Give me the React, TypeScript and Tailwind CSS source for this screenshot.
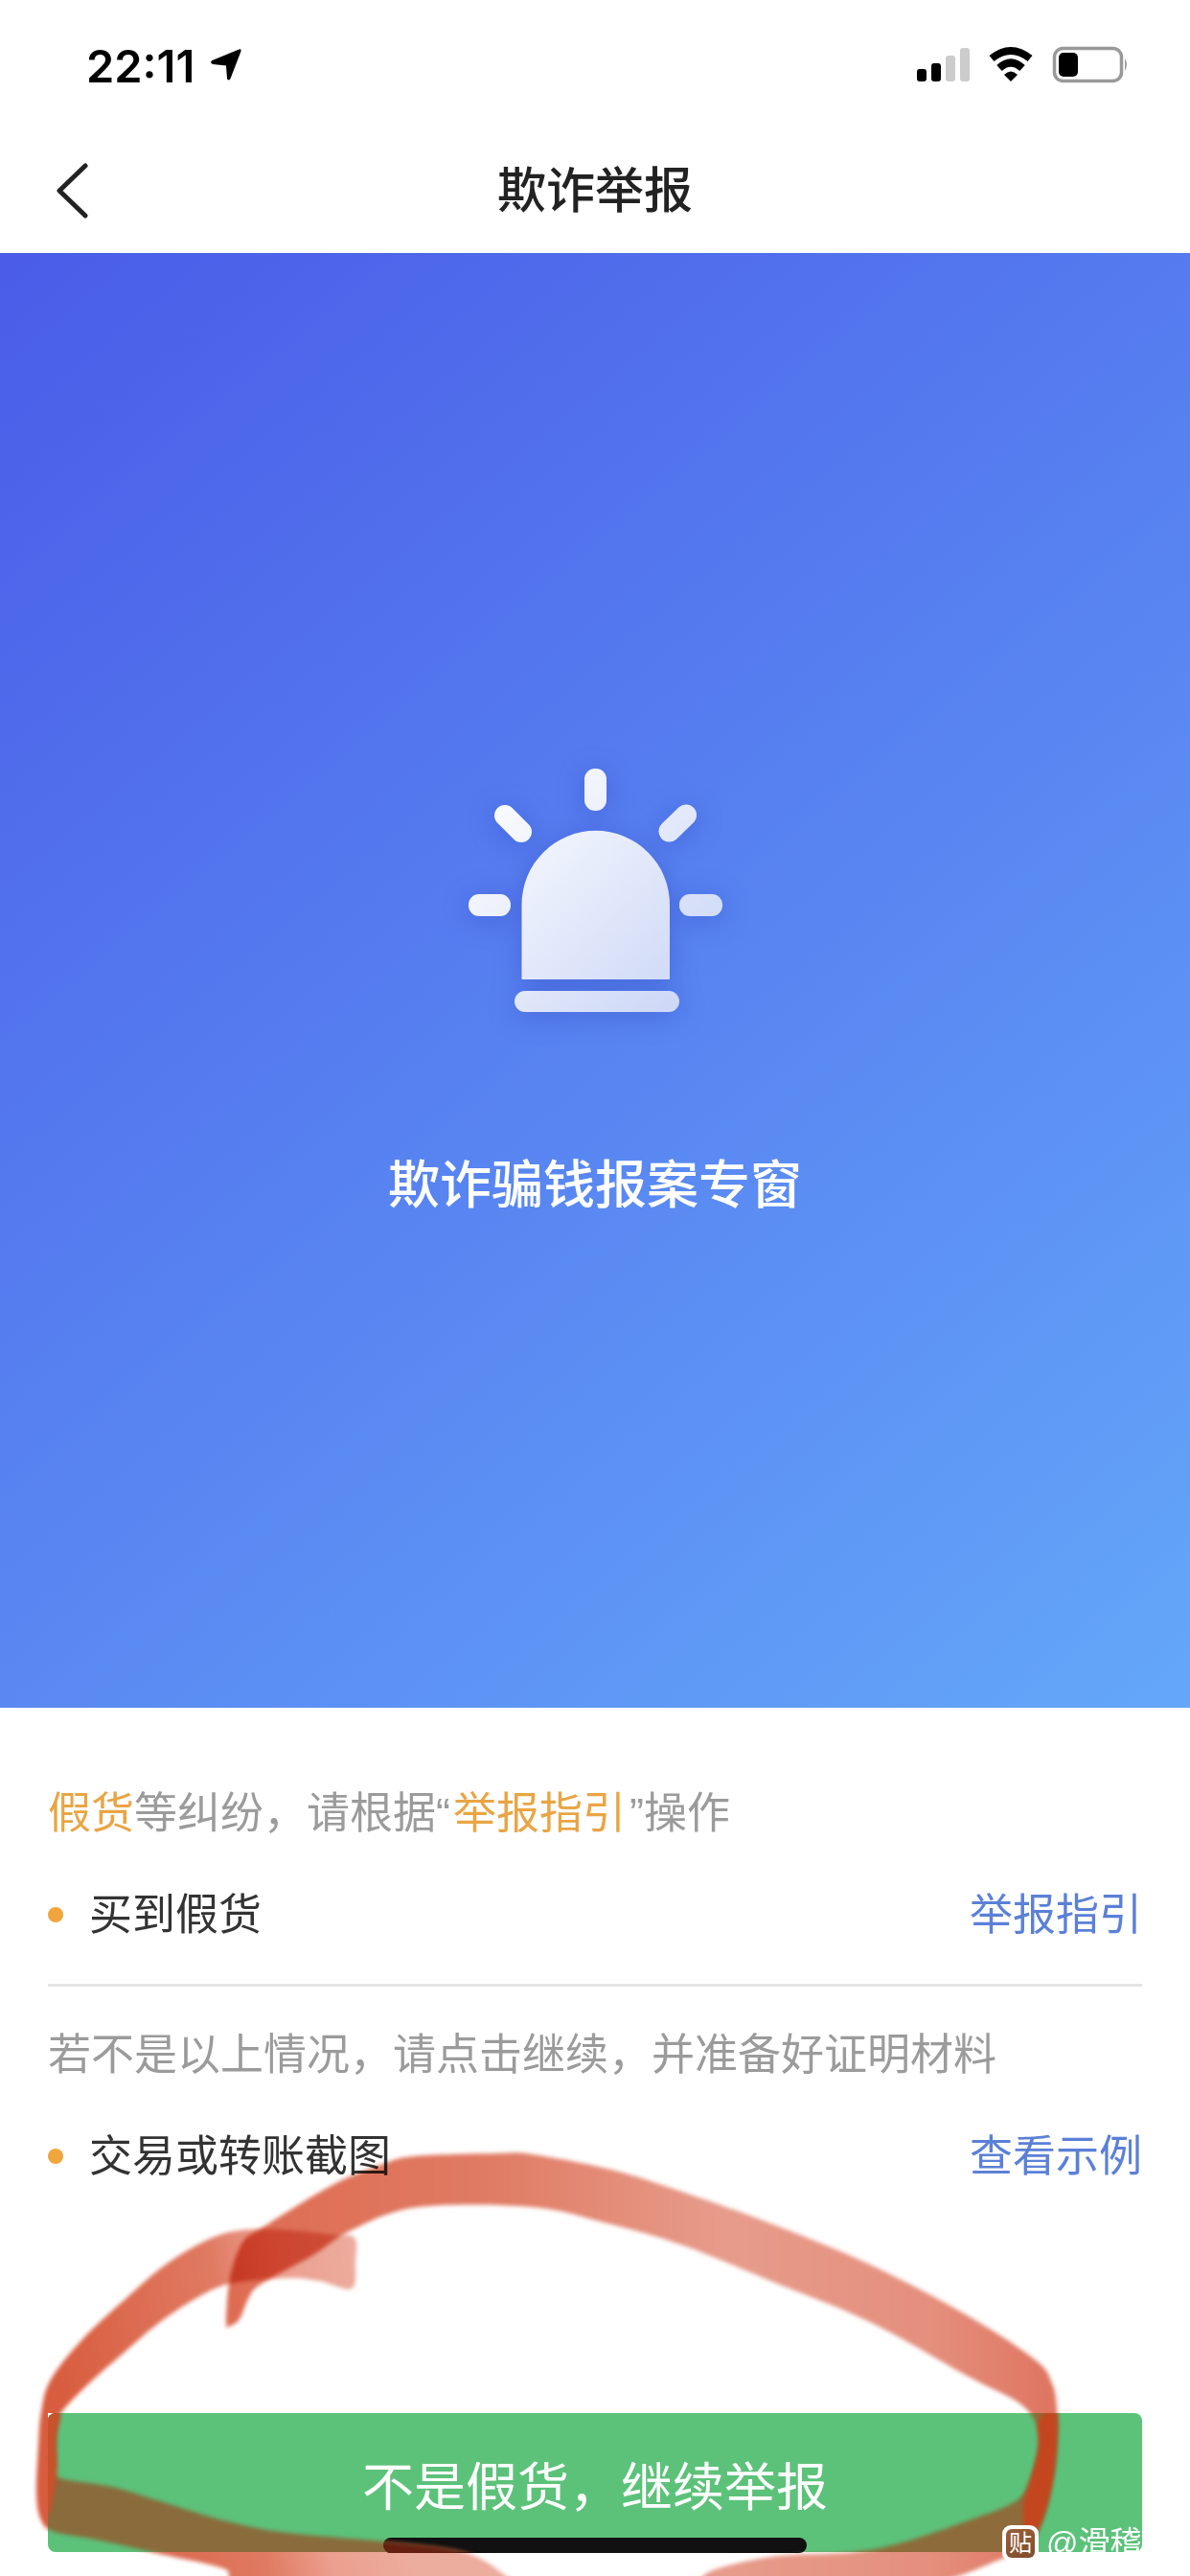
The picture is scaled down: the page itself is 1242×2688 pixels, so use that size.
type P = [number, number];

function smooth(pts: P[]): string {
  const n = pts.length;
  let d = `M${pts[0][0]} ${pts[0][1]}`;
  for (let i = 0; i < n; i++) {
    const p0 = pts[(i - 1 + n) % n];
    const p1 = pts[i];
    const p2 = pts[(i + 1) % n];
    const p3 = pts[(i + 2) % n];
    const c1x = p1[0] + (p2[0] - p0[0]) / 6;
    const c1y = p1[1] + (p2[1] - p0[1]) / 6;
    const c2x = p2[0] - (p3[0] - p1[0]) / 6;
    const c2y = p2[1] - (p3[1] - p1[1]) / 6;
    d += ` C${c1x} ${c1y} ${c2x} ${c2y} ${p2[0]} ${p2[1]}`;
  }
  return d + "Z";
}

const strokeA = smooth([
  [236, 2424], [240, 2377], [253, 2340], [273, 2325], [347, 2280], [400, 2258], [433, 2250], [520, 2247], [555, 2248],
  [634, 2263], [700, 2283], [804, 2320], [908, 2363], [1011, 2417], [1081, 2463], [1098, 2487], [1103, 2513],
  [1103, 2553], [1098, 2593], [1088, 2630], [1077, 2653], [1046, 2670], [950, 2700], [760, 2710], [735, 2687], [804, 2668], [890, 2663], [942, 2653],
  [1011, 2630], [1060, 2610], [1075, 2587], [1084, 2553], [1082, 2530], [1063, 2507], [1011, 2480], [908, 2423],
  [804, 2380], [713, 2343], [634, 2320], [555, 2303], [436, 2303], [367, 2327], [327, 2353], [273, 2383],
  [260, 2397], [250, 2420], [240, 2427],
]);

const strokeB = smooth([
  [370, 2335], [347, 2332], [300, 2327], [253, 2327], [217, 2337], [173, 2363], [133, 2397], [87, 2440], [53, 2483],
  [43, 2517], [40, 2553], [38, 2603], [43, 2630], [57, 2642], [100, 2650], [167, 2665], [233, 2680], [270, 2700],
  [540, 2705], [528, 2688], [484, 2663], [400, 2652], [300, 2643], [233, 2630], [167, 2610], [117, 2595], [60, 2585],
  [58, 2570], [58, 2540], [62, 2520], [93, 2487], [127, 2457], [167, 2423], [207, 2397], [240, 2383], [300, 2377],
  [333, 2380], [367, 2388], [371, 2360],
]);

const stripLeft = smooth([[38, 2518], [62, 2518], [59, 2545], [59, 2585], [50, 2625], [38, 2605], [39, 2560]]);
const stripRight = smooth([[1090, 2518], [1103, 2518], [1103, 2553], [1098, 2593], [1088, 2630], [1072, 2650], [1068, 2615], [1076, 2587], [1084, 2553], [1083, 2530]]);

function Scribble() {
  return (
    <>
      <svg
        viewBox="0 0 1242 2688"
        className="absolute top-0 left-0 w-[1242px] h-[2688px] pointer-events-none mix-blend-multiply"
      >
        <defs>
          <linearGradient id="inkA" gradientUnits="userSpaceOnUse" x1="240" y1="0" x2="1100" y2="0">
            <stop offset="0" stopColor="#de6c52" />
            <stop offset="0.3" stopColor="#e07a62" />
            <stop offset="0.6" stopColor="#e79c8b" />
            <stop offset="0.85" stopColor="#e58f7d" />
            <stop offset="1" stopColor="#de7560" />
          </linearGradient>
          <linearGradient id="inkB" gradientUnits="userSpaceOnUse" x1="40" y1="2400" x2="370" y2="2340">
            <stop offset="0" stopColor="#d85c3e" />
            <stop offset="0.55" stopColor="#e07a62" />
            <stop offset="0.75" stopColor="#ec9f8e" />
            <stop offset="1" stopColor="#ecac9e" />
          </linearGradient>
          <clipPath id="outsideBtn">
            <path clipRule="evenodd" d="M0 0H1242V2688H0Z M50 2518H1192V2663H50Z" />
          </clipPath>
        </defs>
        <g clipPath="url(#outsideBtn)">
          <path d={strokeA} fill="url(#inkA)" className="blur-[2px]" />
          <path d={strokeB} fill="url(#inkB)" className="blur-[2px] mix-blend-multiply" />
        </g>
      </svg>
      <svg viewBox="0 0 1242 2688" className="absolute top-0 left-0 w-[1242px] h-[2688px] pointer-events-none">
        <defs>
          <clipPath id="insideBtn">
            <rect x="50" y="2518" width="1142" height="145" rx="8" />
          </clipPath>
          <clipPath id="insidePill">
            <rect x="400" y="2648" width="442" height="16" rx="8" />
          </clipPath>
        </defs>
        <g clipPath="url(#insideBtn)">
          <path d={strokeA} fill="#8e6b3a" className="blur-[2px]" />
          <path d={strokeB} fill="#8a6b3c" className="blur-[2px]" />
          <path d={stripLeft} fill="#c9512b" className="blur-[2px]" />
          <path d={stripRight} fill="#c4461f" className="blur-[2px]" />
        </g>
        <g clipPath="url(#insidePill)">
          <path d={strokeB} fill="#641f10" className="blur-[2px]" />
        </g>
      </svg>
    </>
  );
}

function Alarm() {
  const fill = "url(#alarmFill)";
  return (
    <svg
      viewBox="488 802 265 254"
      className="w-[265px] h-[254px] overflow-visible drop-shadow-[0_4px_14px_rgba(45,65,185,0.4)]"
    >
      <defs>
        <linearGradient id="alarmFill" gradientUnits="userSpaceOnUse" x1="500" y1="810" x2="745" y2="1056">
          <stop offset="0" stopColor="#ffffff" />
          <stop offset="1" stopColor="#c8d4f6" />
        </linearGradient>
      </defs>
      <rect x="609" y="802" width="23" height="44" rx="11" fill={fill} />
      <rect x="488" y="933" width="44" height="23" rx="11" fill={fill} />
      <rect x="708" y="933" width="45" height="23" rx="11" fill={fill} />
      <line x1="526" y1="851" x2="543" y2="868" stroke={fill} strokeWidth="22" strokeLinecap="round" />
      <line x1="715" y1="850.5" x2="697.5" y2="867.5" stroke={fill} strokeWidth="22" strokeLinecap="round" />
      <path d="M543.5 1022V944A77.25 77.25 0 0 1 698 944V1022Z" fill={fill} />
      <rect x="536" y="1034" width="172" height="22" rx="11" fill={fill} />
    </svg>
  );
}

function StatusBar() {
  return (
    <div className="h-[132px] pt-[4px] flex items-center justify-between pl-[90px] pr-[62px]">
      <div className="flex items-center gap-[15px]">
        <span className="font-['Inter','Liberation_Sans',sans-serif] font-semibold text-[47px] leading-none text-black">
          22:11
        </span>
        <svg viewBox="218 50 36 36" className="w-[36px] h-[36px]">
          <path d="M249.5 51.5L221.5 63Q218.5 65 222 67L236 68.5L237 82Q238.5 85 240.5 82L251.5 53.5Q252 50.5 249.5 51.5Z" fill="#000" />
        </svg>
      </div>
      <div className="flex items-center">
        <svg viewBox="955 48 225 40" className="w-[225px] h-[40px]">
          <rect x="957" y="72" width="10" height="13" rx="3" fill="#000" />
          <rect x="972" y="66" width="10" height="19" rx="3" fill="#000" />
          <rect x="987" y="58" width="10" height="27" rx="3" fill="#cccccc" />
          <rect x="1002" y="50" width="10" height="35" rx="3" fill="#cccccc" />
          <path d="M1035 61Q1055 45 1075 61" fill="none" stroke="#000" strokeWidth="8" />
          <path d="M1043 71Q1055 60 1067 71" fill="none" stroke="#000" strokeWidth="8" />
          <path d="M1048 78Q1055 71 1062 78L1055 85Z" fill="#000" />
          <rect x="1100.5" y="50.5" width="70" height="34" rx="9" fill="none" stroke="#999999" strokeWidth="3.5" />
          <rect x="1105" y="55" width="20" height="25" rx="5" fill="#000" />
          <path d="M1174 61Q1178 67 1174 74Z" fill="#999999" />
        </svg>
      </div>
    </div>
  );
}

export default function App() {
  return (
    <div className="relative w-[1242px] h-[2688px] bg-white overflow-hidden font-['Liberation_Sans','Noto_Sans_CJK_SC',sans-serif]">
      <StatusBar />
      <div className="relative h-[132px] pt-[2px] flex items-center justify-center">
        <svg viewBox="0 0 40 60" className="absolute left-[55px] top-[38px] w-[40px] h-[60px]">
          <path d="M34 3L7 29L34 55" fill="none" stroke="#222222" strokeWidth="5" strokeLinecap="round" strokeLinejoin="round" />
        </svg>
        <span className="text-[51px] font-medium text-[#222222] leading-none">欺诈举报</span>
      </div>

      <div className="h-[1518px] flex flex-col items-center pt-[538px] bg-[linear-gradient(140deg,#4a5ce8,#64a7f9)]">
        <Alarm />
        <div className="mt-[146px] text-[54px] leading-[70px] font-medium text-white">欺诈骗钱报案专窗</div>
      </div>

      <div className="px-[50px] pt-[80px] flex flex-col">
        <div className="h-[60px] flex items-center text-[45px] text-[#9b9b9b] leading-none whitespace-nowrap">
          <span className="text-[#e9a544]">假货</span>等纠纷，请根据“<span className="ml-[3px] mr-[4px] text-[#e9a544]">举报指引</span>”操作
        </div>
        <div className="mt-[46px] h-[60px] flex items-center justify-between text-[45px] leading-none">
          <div className="flex items-center gap-[27px]">
            <span className="w-[16px] h-[16px] rounded-full bg-[#f0a63c]" />
            <span className="text-[#333333]">买到假货</span>
          </div>
          <span className="text-[#5b80d8]">举报指引</span>
        </div>
        <div className="mt-[42px] h-[3px] bg-[#e5e5e5]" />
        <div className="mt-[41px] h-[60px] flex items-center text-[45px] text-[#9b9b9b] leading-none whitespace-nowrap">
          若不是以上情况，请点击继续，并准备好证明材料
        </div>
        <div className="mt-[46px] h-[60px] flex items-center justify-between text-[45px] leading-none">
          <div className="flex items-center gap-[27px]">
            <span className="w-[16px] h-[16px] rounded-full bg-[#f0a63c]" />
            <span className="text-[#333333]">交易或转账截图</span>
          </div>
          <span className="text-[#5b80d8]">查看示例</span>
        </div>
        <div className="mt-[238px] h-[145px] rounded-[8px] bg-[#5cc27a] flex items-center justify-center pt-[10px] text-[54px] leading-none text-white">
          不是假货，继续举报
        </div>
      </div>

      <div className="absolute left-[400px] top-[2648px] w-[442px] h-[16px] rounded-full bg-[#111111]" />
      <Scribble />

      <div className="absolute left-[1046px] top-[2635px] w-[38px] h-[38px] rounded-[9px] bg-white p-[4px]">
        <div className="w-full h-full rounded-[6px] bg-[linear-gradient(160deg,#9a5e36,#7f4f2c)] flex items-center justify-center text-[24px] leading-none text-white">
          贴
        </div>
      </div>
      <div className="absolute left-[1092px] top-[2634px] w-[100px] h-[40px] overflow-hidden whitespace-nowrap text-[33px] leading-[40px] text-white">
        @滑稽
      </div>
    </div>
  );
}
